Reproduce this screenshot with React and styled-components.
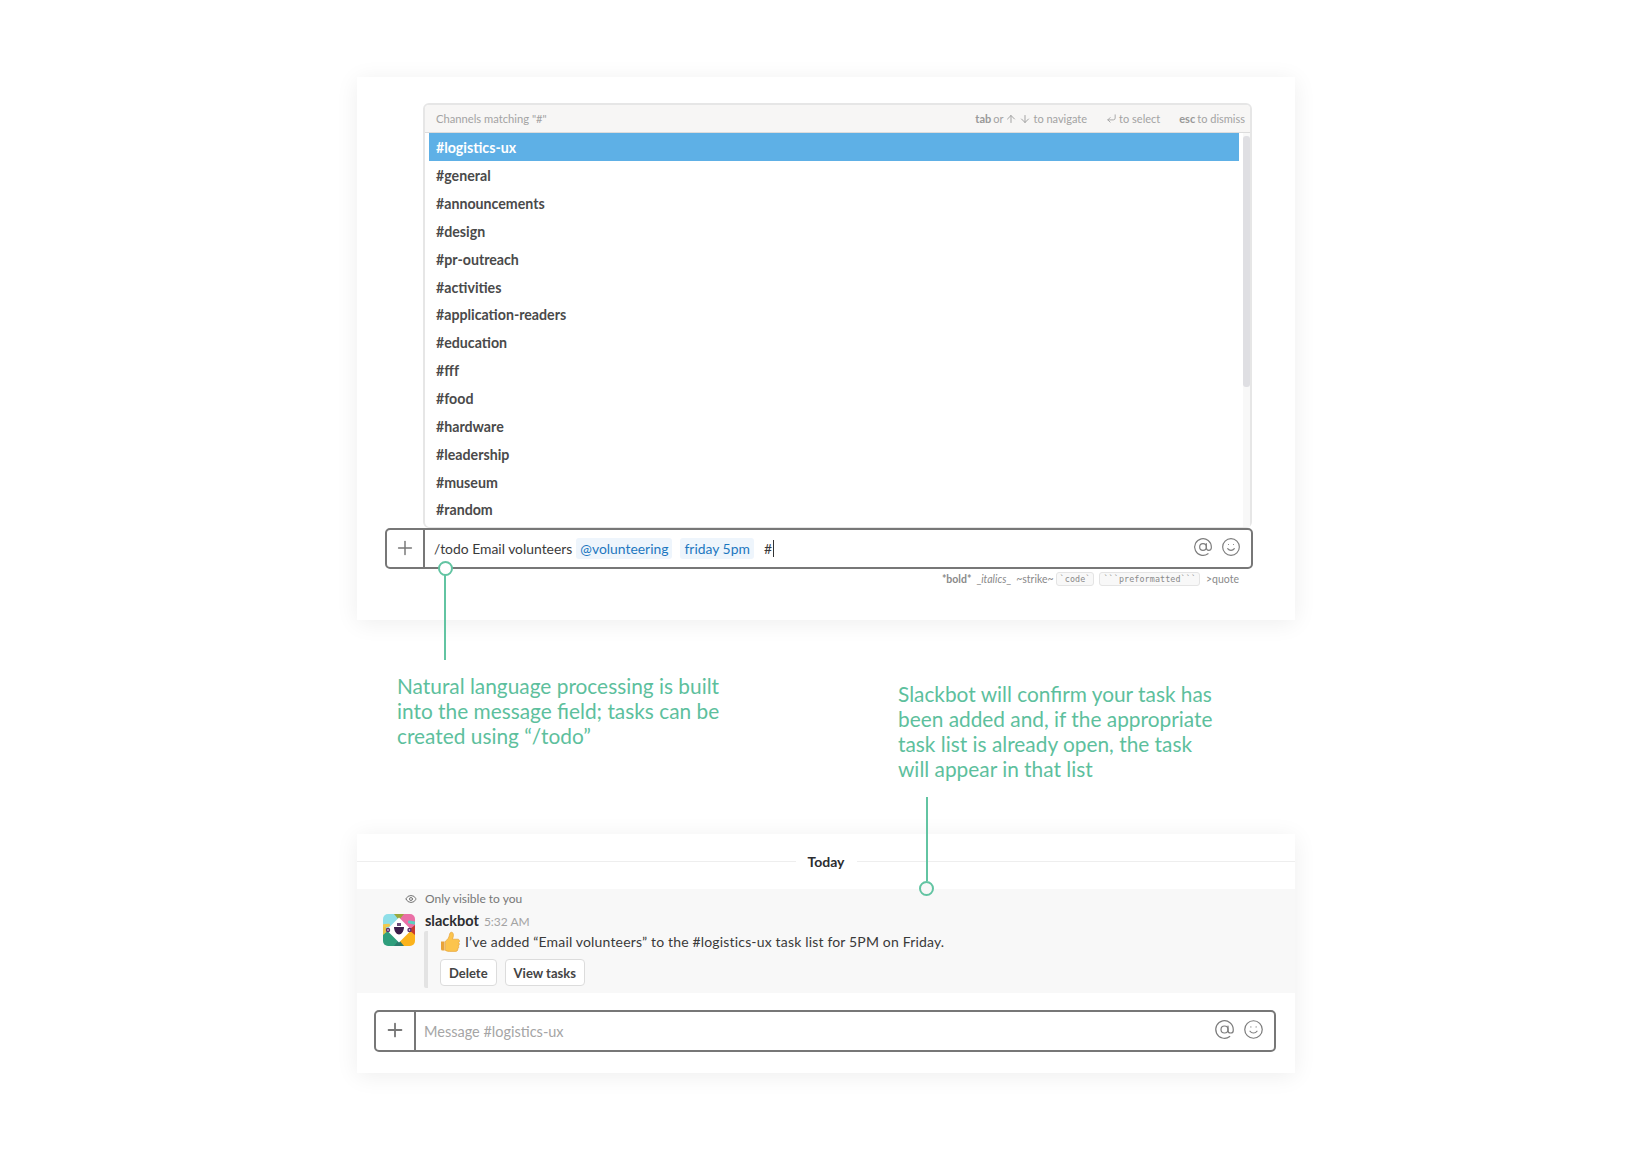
import React from 'react';
import styled, { createGlobalStyle } from 'styled-components';
import { AtSign, Smile, Plus, Eye, ArrowUp, ArrowDown, CornerDownLeft } from 'lucide-react';

const Global = createGlobalStyle`
  html, body { margin: 0; padding: 0; background: #fff; }
  body { font-family: Lato, "Liberation Sans", sans-serif; color: #2c2d30; }
`;

const Page = styled.div`
  width: 1651px;
  height: 1154px;
  padding: 77px 0 0 357px;
  box-sizing: border-box;
  overflow: hidden;
`;

const Card = styled.div`
  position: relative;
  width: 938px;
  background: #fff;
  box-shadow: 0 3px 22px rgba(0, 0, 0, 0.07);
`;

const TopCard = styled(Card)`
  height: 543px;
  padding-top: 26px;
  box-sizing: border-box;
`;

const BottomCard = styled(Card)`
  height: 239px;
  padding-top: 17px;
  box-sizing: border-box;
`;

const Dropdown = styled.div`
  width: 829px;
  margin-left: 66px;
  height: 425px;
  box-sizing: border-box;
  border: 2px solid #e6e6e6;
  border-bottom-width: 1px;
  border-radius: 6px;
  display: flex;
  flex-direction: column;
`;

const DropHeader = styled.div`
  height: 28px;
  flex: none;
  box-sizing: border-box;
  background: #f7f6f5;
  border-bottom: 1px solid #dcdcdc;
  border-radius: 4px 4px 0 0;
  display: flex;
  align-items: center;
  justify-content: space-between;
  padding: 0 5px 0 11px;
  font-size: 11.2px;
  color: #a3a3a3;
`;

const HeaderHints = styled.div`
  display: flex;
  gap: 19px;
  font-size: 11px;
`;

const Hint = styled.span`
  display: inline-flex;
  align-items: center;
  gap: 2px;
  b { font-weight: 700; color: #999; }
`;

const DropBody = styled.div`
  flex: 1;
  display: flex;
  min-height: 0;
  padding-left: 4px;
`;

const List = styled.div`
  flex: 1;
  display: flex;
  flex-direction: column;
`;

const Row = styled.div`
  height: 27.85px;
  flex: none;
  box-sizing: border-box;
  display: flex;
  align-items: center;
  padding: 2px 0 0 7px;
  font-size: 14.2px;
  font-weight: 700;
  color: ${(p) => (p.$active ? '#fff' : '#4a4a4a')};
  background: ${(p) => (p.$active ? '#5eb0e6' : 'transparent')};
`;

const Track = styled.div`
  width: 7px;
  margin-left: 4px;
  padding-top: 3px;
  background: #f8f8f8;
`;

const Thumb = styled.div`
  height: 251px;
  background: #dfdfe3;
  border-radius: 3px;
`;

const InputBox = styled.div`
  display: flex;
  align-items: stretch;
  box-sizing: border-box;
  width: ${(p) => p.$w}px;
  height: ${(p) => p.$h}px;
  margin-left: ${(p) => p.$left}px;
  border: 2px solid #777;
  border-radius: 5px;
  background: #fff;
`;

const PlusCell = styled.div`
  width: ${(p) => p.$w}px;
  flex: none;
  padding-bottom: 2px;
  box-sizing: content-box;
  display: flex;
  align-items: center;
  justify-content: center;
  border-right: 2px solid #777;
  color: #777;
`;

const InputText = styled.div`
  flex: 1;
  display: flex;
  align-items: center;
  padding-left: ${(p) => p.$pad}px;
  font-size: 13.9px;
  color: #3a3a3a;
`;

const Mention = styled.span`
  background: #eef5fc;
  color: #1d77c0;
  border-radius: 3px;
  padding: 2px 4px;
  margin-left: ${(p) => p.$gap}px;
`;

const Hash = styled.span`
  margin-left: 10px;
`;

const Caret = styled.span`
  display: inline-block;
  width: 1px;
  height: 17px;
  background: #333;
  margin-left: 1px;
`;

const Placeholder = styled.span`
  color: #a5a5a5;
  font-size: 14.5px;
`;

const InputIcons = styled.div`
  display: flex;
  align-items: center;
  gap: ${(p) => p.$gap}px;
  padding: 0 ${(p) => p.$pad}px 4px 0;
  color: #7d7d7d;
`;

const FormatHints = styled.div`
  display: flex;
  justify-content: flex-end;
  align-items: center;
  height: 20px;
  padding-right: 56px;
  font-size: 10.5px;
  color: #8a8a8a;
  gap: 6px;
  b { font-weight: 700; }
  i { font-style: italic; }
`;

const Fmt = styled.span`
  margin-right: ${(p) => p.$pull || 0}px;
`;

const Code = styled.span`
  font-family: "DejaVu Sans Mono", "Liberation Mono", monospace;
  font-size: 8.4px;
  letter-spacing: 0.1px;
  border: 1px solid #e4e4e4;
  background: #f8f8f8;
  border-radius: 3px;
  padding: 1px 3px;
  margin-right: ${(p) => p.$pull || 0}px;
`;

const Stem = styled.div`
  position: absolute;
  left: ${(p) => p.$left}px;
  top: ${(p) => p.$top}px;
  width: 2px;
  height: ${(p) => p.$h}px;
  background: #62c4a2;
`;

const Ring = styled.div`
  position: absolute;
  left: ${(p) => p.$left}px;
  top: ${(p) => p.$top}px;
  width: 15px;
  height: 15px;
  box-sizing: border-box;
  border: 2px solid #62c4a2;
  border-radius: 50%;
  background: ${(p) => p.$bg};
`;

const Notes = styled.div`
  height: 214px;
  display: flex;
  box-sizing: border-box;
  padding: 53px 0 0 40px;
`;

const Note = styled.p`
  margin: ${(p) => p.$top}px 0 0 ${(p) => p.$left}px;
  width: ${(p) => p.$w}px;
  font-size: 20.85px;
  line-height: 25px;
  color: #5dbf9d;
  white-space: pre-line;
`;

const DayDivider = styled.div`
  display: flex;
  align-items: center;
  gap: 12px;
  height: 21px;
  margin-bottom: 17px;
  font-size: 14px;
  font-weight: 700;
  color: #2c2d30;
  &::before, &::after {
    content: '';
    flex: 1;
    height: 1px;
    background: #eeeeee;
  }
`;

const MsgArea = styled.div`
  height: 104px;
  box-sizing: border-box;
  background: #f8f8f8;
  padding: 1px 0 0 26px;
  margin-bottom: 17px;
`;

const Visible = styled.div`
  display: flex;
  align-items: center;
  height: 17px;
  padding-left: 22px;
  margin-bottom: 3px;
  gap: 8px;
  font-size: 12px;
  color: #777;
`;

const MsgRow = styled.div`
  display: flex;
  gap: 10px;
`;

const Avatar = styled.svg`
  width: 32px;
  height: 32px;
  margin-top: 4px;
  flex: none;
`;

const MsgMain = styled.div`
  flex: 1;
`;

const Author = styled.div`
  display: flex;
  align-items: baseline;
  gap: 5px;
  height: 21px;
  font-size: 14.5px;
  font-weight: 700;
  color: #2c2d30;
  line-height: 22px;
`;

const Time = styled.span`
  font-size: 12px;
  font-weight: 400;
  color: #a3a3a3;
`;

const Attachment = styled.div`
  border-left: 4px solid #e3e3e3;
  border-radius: 2px;
  margin-left: -1px;
  padding-left: 12px;
  height: 57px;
`;

const AttachText = styled.div`
  display: flex;
  align-items: center;
  gap: 5px;
  height: 20px;
  font-size: 14px;
  letter-spacing: 0.17px;
  color: #3a3a3a;
`;

const Thumbs = styled.svg`
  width: 20px;
  height: 21px;
  flex: none;
`;

const Actions = styled.div`
  display: flex;
  gap: 8px;
  margin-top: 8px;
`;

const ActionBtn = styled.div`
  height: 27px;
  box-sizing: border-box;
  display: flex;
  align-items: center;
  padding: 0 8px;
  background: #fff;
  border: 1px solid #dcdcdc;
  border-radius: 4px;
  font-size: 13px;
  font-weight: 700;
  color: #444;
`;

const channels = ['#logistics-ux', '#general', '#announcements', '#design', '#pr-outreach', '#activities', '#application-readers', '#education', '#fff', '#food', '#hardware', '#leadership', '#museum', '#random'];

function SlackbotLogo() {
  return (
    <Avatar viewBox="0 0 32 32">
      <defs>
        <clipPath id="bot"><rect width="32" height="32" rx="5" /></clipPath>
      </defs>
      <g clipPath="url(#bot)">
        <rect width="16" height="16" fill="#8fdfe8" />
        <rect x="16" width="16" height="16" fill="#ea6fa6" />
        <rect y="16" width="16" height="16" fill="#2f9e7c" />
        <rect x="16" y="16" width="16" height="16" fill="#fbb31c" />
        <path d="M11 0h10l-5 6z" fill="#9aa83c" />
        <path d="M0 11l6 5-6 5z" fill="#e8c24a" />
        <path d="M32 11l-6 5 6 5z" fill="#c8392f" />
        <path d="M11 32h10l-5-6z" fill="#2b7a6c" />
        <path d="M16 3.500L28.500 16 16 28.500 3.500 16z" fill="#fff" />
        <path d="M11 13h10c0 4-2.500 7.500-5 7.500S11 17 11 13z" fill="#3b1d4a" />
        <path d="M14 9h4v3h-4z" fill="#6a4a7a" />
        <rect x="-1" y="10" width="8" height="3" rx="1.500" fill="#f2c94c" transform="rotate(-8 3 11)" />
        <rect x="25" y="7" width="8" height="3" rx="1.500" fill="#5ecfc0" transform="rotate(12 29 8)" />
        <circle cx="5" cy="16" r="2.200" fill="#5a2d6e" />
        <circle cx="26.500" cy="16" r="2.200" fill="#5a2d6e" />
        <circle cx="5" cy="16" r="0.800" fill="#fff" />
        <circle cx="26.500" cy="16" r="0.800" fill="#fff" />
      </g>
    </Avatar>
  );
}

function ThumbsUp() {
  return (
    <Thumbs viewBox="0 0 20 21">
      <path d="M1 10.500h3.600v9H2.600A1.600 1.600 0 0 1 1 17.900z" fill="#e8a33a" />
      <path d="M5.400 10.200c2-1.400 3.500-3.400 4-6 .3-1.700.8-3 2-3 1.600 0 2.200 1.800 2 3.600-.2 1.200-.5 2.300-1 3.400h5.200c1.200 0 2 .9 1.900 2-.1.700-.5 1.200-1 1.500.6.400.9 1 .8 1.700-.1.700-.5 1.200-1.100 1.400.4.400.6 1 .5 1.600-.1.700-.6 1.200-1.200 1.400.2.400.3.800.2 1.200-.2.900-1 1.400-1.900 1.400H9.500c-1.700 0-3-.4-4.100-1z" fill="#fcc44d" stroke="#e39a2c" strokeWidth="0.6" />
    </Thumbs>
  );
}

export default function App() {
  return (
    <Page>
      <Global />
      <TopCard>
        <Dropdown>
          <DropHeader>
            <span>Channels matching "#"</span>
            <HeaderHints>
              <Hint><b>tab</b> or <ArrowUp size={12} /><ArrowDown size={12} /> to navigate</Hint>
              <Hint><CornerDownLeft size={11} /> to select</Hint>
              <Hint><b>esc</b> to dismiss</Hint>
            </HeaderHints>
          </DropHeader>
          <DropBody>
            <List>
              {channels.map((c, i) => (
                <Row key={c} $active={i === 0}>{c}</Row>
              ))}
            </List>
            <Track><Thumb /></Track>
          </DropBody>
        </Dropdown>
        <InputBox $w={868} $h={41} $left={28}>
          <PlusCell $w={36}><Plus size={22} strokeWidth={1.6} /></PlusCell>
          <InputText $pad={9}>
            /todo Email volunteers
            <Mention $gap={4}>@volunteering</Mention>
            <Mention $gap={8}>friday 5pm</Mention>
            <Hash>#</Hash><Caret />
          </InputText>
          <InputIcons $gap={8} $pad={10}>
            <AtSign size={20} strokeWidth={1.4} />
            <Smile size={20} strokeWidth={1.4} />
          </InputIcons>
        </InputBox>
        <FormatHints>
          <Fmt as="b" $pull={-1}>*bold*</Fmt>
          <Fmt $pull={-1}>_<i>italics</i>_</Fmt>
          <Fmt $pull={-4}>~strike~</Fmt>
          <Code $pull={-1}>`code`</Code>
          <Code>```preformatted```</Code>
          <span>&gt;quote</span>
        </FormatHints>
        <Ring $left={81} $top={484} $bg="#fff" />
        <Stem $left={87} $top={498} $h={85} />
      </TopCard>
      <Notes>
        <Note $w={480} $top={0} $left={0}>{'Natural language processing is built\ninto the message field; tasks can be\ncreated using “/todo”'}</Note>
        <Note $w={420} $top={8} $left={21}>{'Slackbot will confirm your task has\nbeen added and, if the appropriate\ntask list is already open, the task\nwill appear in that list'}</Note>
      </Notes>
      <BottomCard>
        <DayDivider>Today</DayDivider>
        <MsgArea>
          <Visible><Eye size={12} />Only visible to you</Visible>
          <MsgRow>
            <SlackbotLogo />
            <MsgMain>
              <Author>slackbot <Time>5:32 AM</Time></Author>
              <Attachment>
                <AttachText><ThumbsUp />I’ve added “Email volunteers” to the #logistics-ux task list for 5PM on Friday.</AttachText>
                <Actions>
                  <ActionBtn>Delete</ActionBtn>
                  <ActionBtn>View tasks</ActionBtn>
                </Actions>
              </Attachment>
            </MsgMain>
          </MsgRow>
        </MsgArea>
        <InputBox $w={902} $h={42} $left={17}>
          <PlusCell $w={38}><Plus size={22} strokeWidth={2} /></PlusCell>
          <InputText $pad={8}><Placeholder>Message #logistics-ux</Placeholder></InputText>
          <InputIcons $gap={8.5} $pad={10}>
            <AtSign size={21} strokeWidth={1.4} />
            <Smile size={21} strokeWidth={1.4} />
          </InputIcons>
        </InputBox>
        <Stem $left={569} $top={-37} $h={84} />
        <Ring $left={562} $top={47} $bg="#f8f8f8" />
      </BottomCard>
    </Page>
  );
}
